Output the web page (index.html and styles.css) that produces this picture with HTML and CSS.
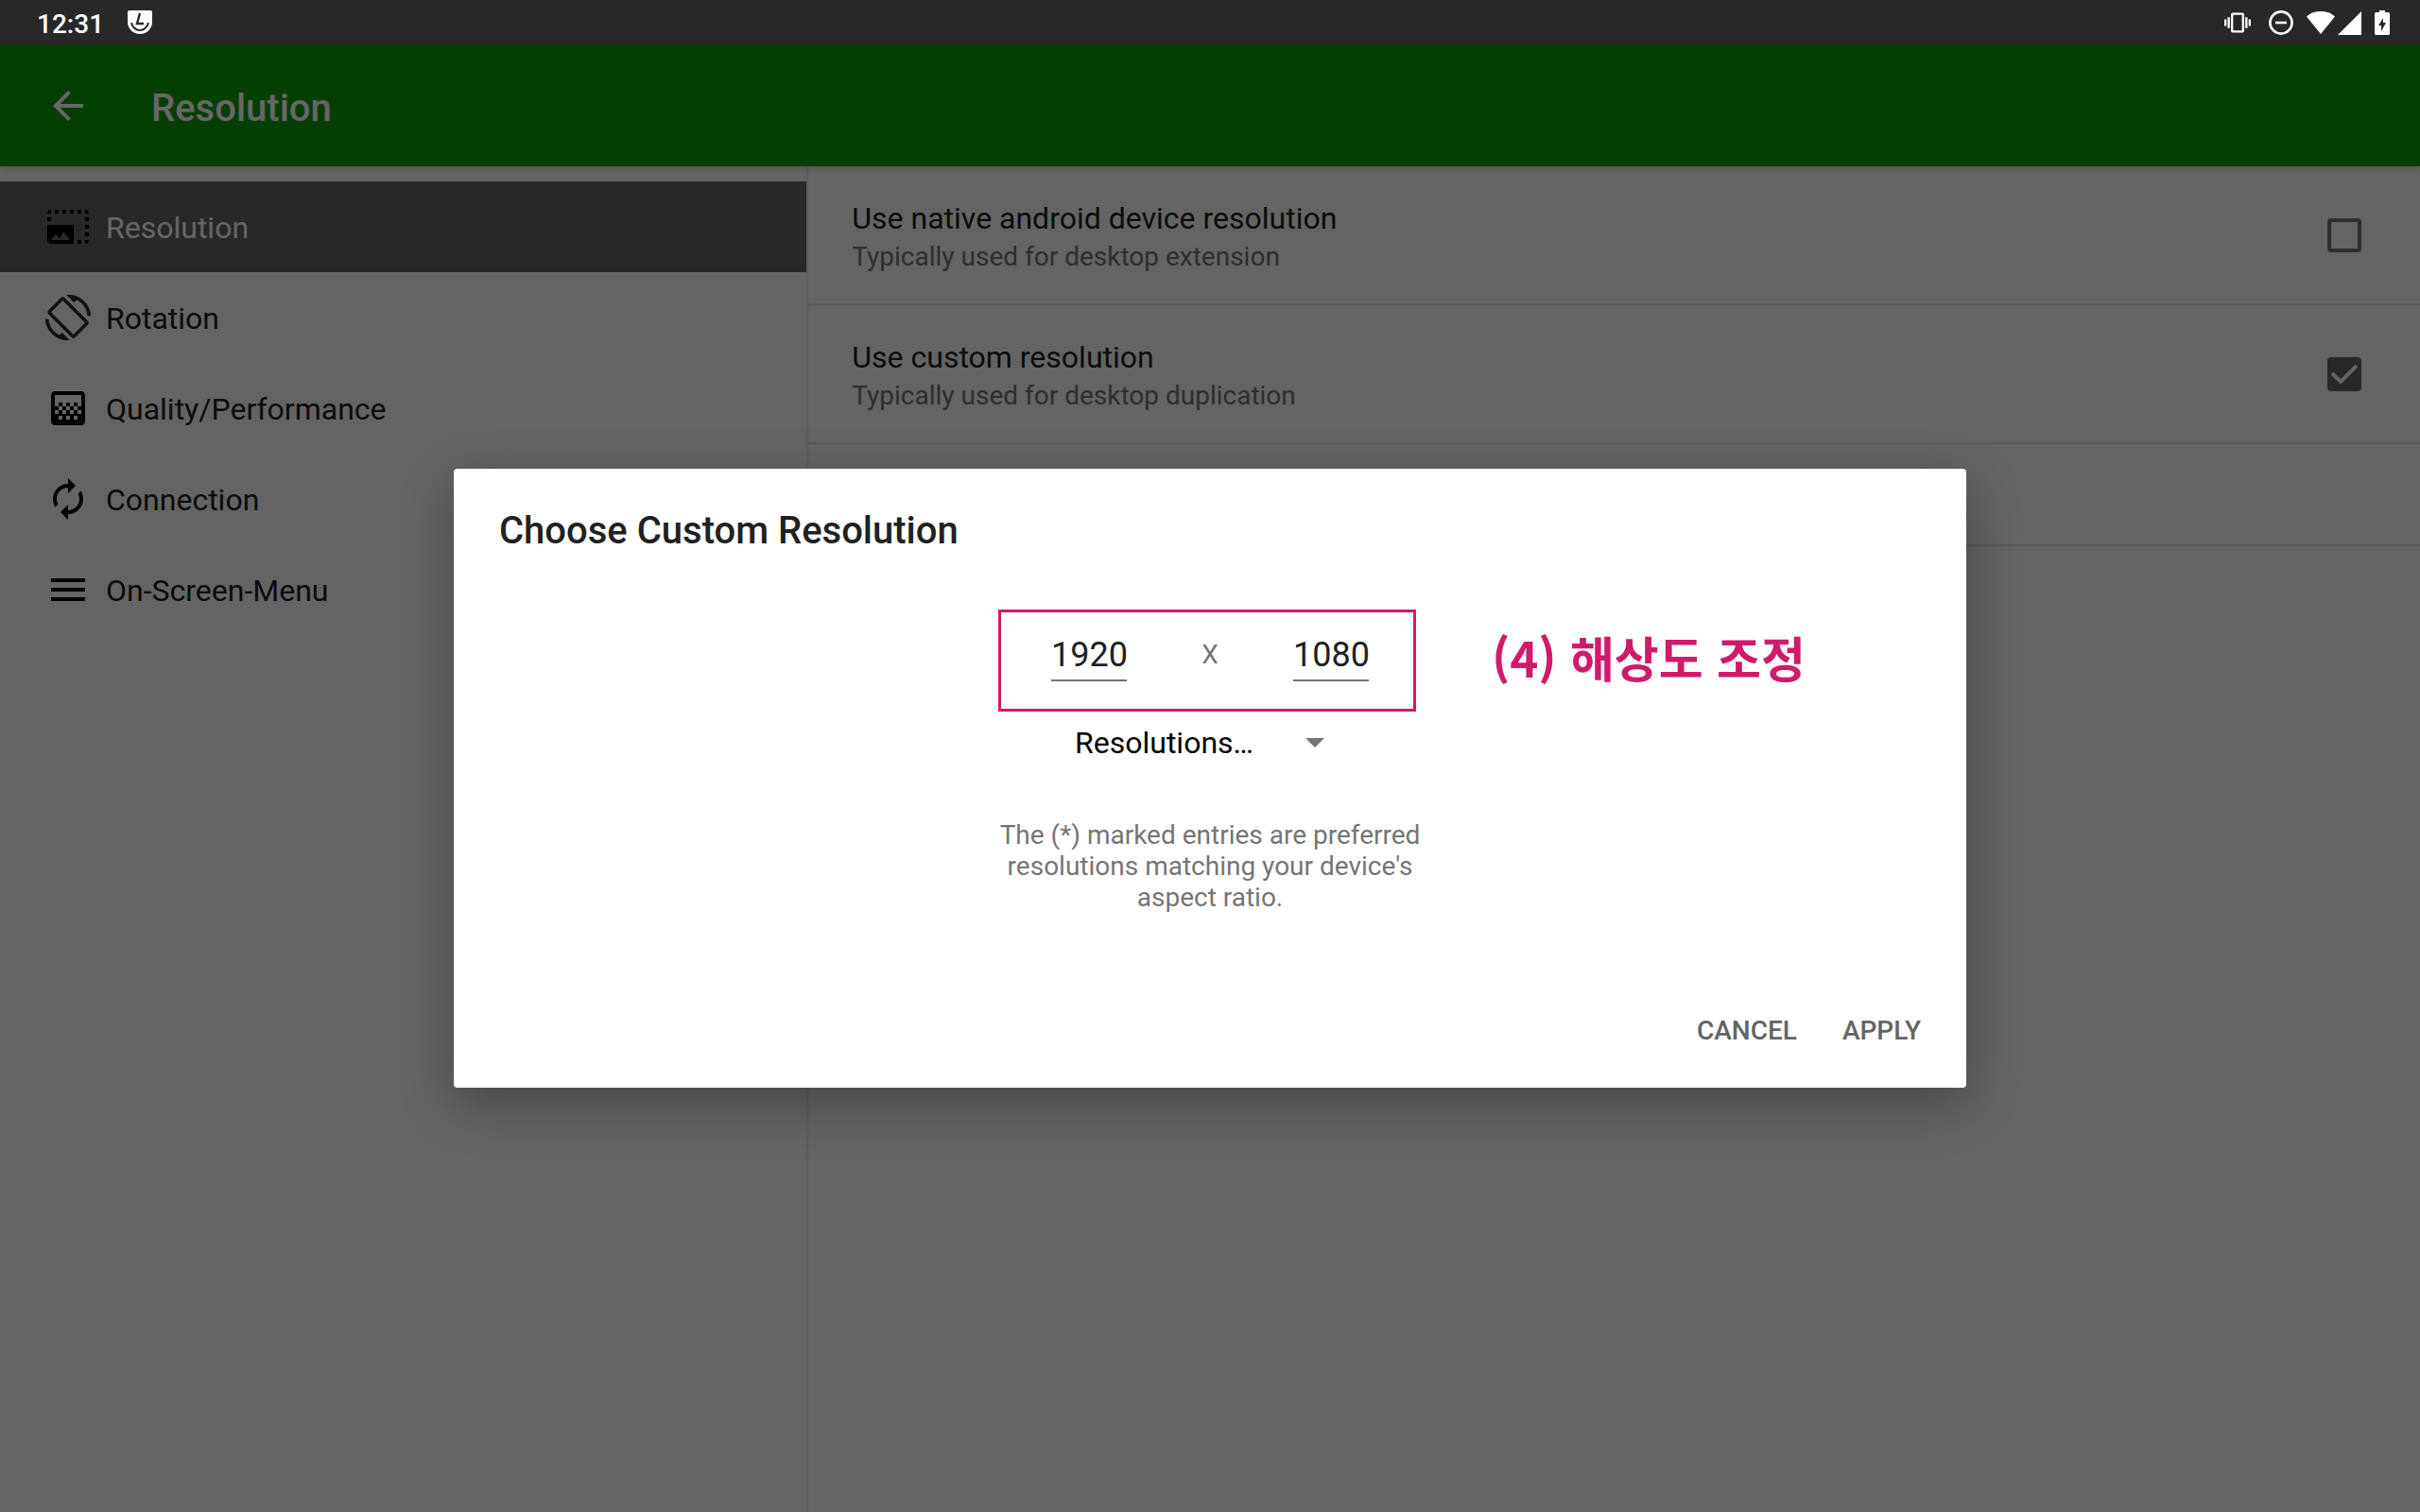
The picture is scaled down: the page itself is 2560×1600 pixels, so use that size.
FILE: index.html
```html
<!DOCTYPE html>
<html lang="en">
<head>
<meta charset="utf-8">
<meta name="viewport" content="width=device-width, initial-scale=1">
<title>Resolution</title>
<link rel="stylesheet" href="styles.css">
</head>
<body>
<div class="status-bar">
  <div class="status-group status-left">
    <time>12:31</time>
    <svg class="app-badge" viewBox="0 0 26 26" width="26" height="26" aria-hidden="true">
      <path fill="#fff" d="M2 0h22a2 2 0 0 1 2 2v10a13 13 0 0 1-26 0V2a2 2 0 0 1 2-2z"/>
      <path fill="none" stroke="#282828" stroke-width="2" d="M4 13c1 5 5 8 9 8s8-3 9-8"/>
      <path fill="none" stroke="#282828" stroke-width="2.400" d="M13 3l-3 11h7"/>
    </svg>
  </div>
  <div class="status-group status-right">
    <svg class="vibrate" viewBox="0 0 24 24" width="28" height="28" fill="#fff" aria-hidden="true"><path d="M0 15h2V9H0v6zm3 2h2V7H3v10zm19-8v6h2V9h-2zm-3 8h2V7h-2v10zM16.500 3h-9C6.670 3 6 3.670 6 4.500v15c0 .83.67 1.500 1.500 1.500h9c.83 0 1.500-.67 1.500-1.500v-15c0-.83-.67-1.500-1.500-1.500zM16 19H8V5h8v14z"/></svg>
    <svg class="dnd" viewBox="0 0 26 26" width="26" height="26" fill="none" stroke="#fff" aria-hidden="true"><circle cx="13" cy="13" r="11.600" stroke-width="2.600"/><path stroke-width="2.600" d="M7 13h12"/></svg>
    <svg class="wifi" viewBox="0 0 30 24" width="30" height="24" fill="#fff" aria-hidden="true"><path d="M15 24L0 5.500C8-1.800 22-1.800 30 5.500z"/></svg>
    <svg class="signal" viewBox="0 0 25 25" width="25" height="25" fill="#fff" aria-hidden="true"><path d="M0 25L25 0v25z"/></svg>
    <svg viewBox="0 0 16 26" width="16" height="26" aria-hidden="true"><path fill="#fff" d="M5 0h6v2h3.500A1.500 1.500 0 0 1 16 3.500v21a1.500 1.500 0 0 1-1.500 1.500h-13A1.500 1.500 0 0 1 0 24.500v-21A1.500 1.500 0 0 1 1.500 2H5z"/><path fill="#282828" d="M9 8v5h3l-5 9v-6H4z"/></svg>
  </div>
</div>

<div class="app">
  <header class="app-bar">
    <button class="back" type="button" aria-label="Back">
      <svg viewBox="0 0 24 24" width="48" height="48" fill="currentColor"><path d="M20 11H7.830l5.590-5.590L12 4l-8 8 8 8 1.410-1.410L7.830 13H20v-2z"/></svg>
    </button>
    <h1>Resolution</h1>
  </header>

  <div class="panes">
    <nav class="sections">
      <a class="section selected" href="#resolution">
        <svg viewBox="0 0 24 24" width="48" height="48" aria-hidden="true"><path d="M21 15h2v2h-2v-2zm0-4h2v2h-2v-2zm2 8h-2v2c1 0 2-1 2-2zM13 3h2v2h-2V3zm8 4h2v2h-2V7zm0-4v2h2c0-1-1-2-2-2zM1 7h2v2H1V7zm16-4h2v2h-2V3zm0 16h2v2h-2v-2zM3 3C2 3 1 4 1 5h2V3zm6 0h2v2H9V3zM5 3h2v2H5V3zm-4 8v8c0 1.100.9 2 2 2h12V11H1zm2 8l2.500-3.210 1.790 2.150 2.500-3.220L13 19H3z"/></svg>
        <span class="section-label">Resolution</span>
      </a>
      <a class="section" href="#rotation">
        <svg viewBox="0 0 24 24" width="48" height="48" fill="#2b2b2b" stroke="#2b2b2b" stroke-width=".4" aria-hidden="true"><path d="M16.480 2.520c3.270 1.550 5.610 4.720 5.970 8.480h1.500C23.440 4.840 18.290 0 12 0l-.66.03 3.810 3.810 1.330-1.320zm-6.250-.77c-.59-.59-1.540-.59-2.120 0L1.750 8.110c-.59.59-.59 1.540 0 2.120l12.020 12.020c.59.59 1.540.59 2.120 0l6.360-6.360c.59-.59.59-1.540 0-2.120L10.230 1.750zm4.600 19.440L2.810 9.170l6.360-6.360 12.020 12.020-6.360 6.360zm-7.310.29C4.250 19.940 1.910 16.760 1.550 13H.05C.56 19.160 5.710 24 12 24l.66-.03-3.810-3.810-1.330 1.320z"/></svg>
        <span class="section-label">Rotation</span>
      </a>
      <a class="section" href="#quality">
        <svg viewBox="0 0 24 24" width="48" height="48" aria-hidden="true"><path d="M11 9h2v2h-2zm-2 2h2v2H9zm4 0h2v2h-2zm2-2h2v2h-2zM7 9h2v2H7zm12-6H5c-1.100 0-2 .9-2 2v14c0 1.100.9 2 2 2h14c1.100 0 2-.9 2-2V5c0-1.100-.9-2-2-2zM9 18H7v-2h2v2zm4 0h-2v-2h2v2zm4 0h-2v-2h2v2zm2-7h-2v2h2v2h-2v-2h-2v2h-2v-2h-2v2H9v-2H7v2H5v-2h2v-2H5V5h14v6z"/></svg>
        <span class="section-label">Quality/Performance</span>
      </a>
      <a class="section" href="#connection">
        <svg viewBox="0 0 24 24" width="48" height="48" aria-hidden="true"><path d="M12 6v3l4-4-4-4v3c-4.420 0-8 3.580-8 8 0 1.570.46 3.030 1.240 4.260L6.700 14.800c-.45-.83-.7-1.790-.7-2.800 0-3.310 2.690-6 6-6zm6.760 1.740L17.300 9.200c.44.84.7 1.790.7 2.800 0 3.310-2.690 6-6 6v-3l-4 4 4 4v-3c4.420 0 8-3.580 8-8 0-1.570-.46-3.030-1.240-4.260z"/></svg>
        <span class="section-label">Connection</span>
      </a>
      <a class="section" href="#menu">
        <svg viewBox="0 0 24 24" width="48" height="48" aria-hidden="true"><path d="M3 18h18v-2H3v2zm0-5h18v-2H3v2zm0-7v2h18V6H3z"/></svg>
        <span class="section-label">On-Screen-Menu</span>
      </a>
    </nav>

    <main class="settings">
      <label class="setting">
        <span class="setting-text">
          <span class="setting-title">Use native android device resolution</span>
          <span class="setting-note">Typically used for desktop extension</span>
        </span>
        <input class="check" type="checkbox">
      </label>
      <label class="setting">
        <span class="setting-text">
          <span class="setting-title">Use custom resolution</span>
          <span class="setting-note">Typically used for desktop duplication</span>
        </span>
        <span class="check-wrap">
          <input class="check" type="checkbox" checked>
          <svg class="tick" viewBox="0 0 36 36" width="36" height="36" aria-hidden="true"><path fill="none" stroke="#fafafa" stroke-width="4" d="M5 17l9 9L31 9"/></svg>
        </span>
      </label>
      <div class="setting setting-short"></div>
    </main>
  </div>

  <div class="scrim">
    <form class="dialog" role="dialog" aria-labelledby="dialog-title">
      <h2 id="dialog-title">Choose Custom Resolution</h2>
      <div class="size-row">
        <input class="size" type="text" inputmode="numeric" aria-label="Width" value="1920">
        <span class="times">X</span>
        <input class="size" type="text" inputmode="numeric" aria-label="Height" value="1080">
      </div>
      <div class="picker">
        <select aria-label="Resolutions">
          <option>Resolutions…</option>
        </select>
        <svg class="caret" viewBox="0 0 20 10" width="20" height="10" aria-hidden="true"><path fill="#757575" d="M0 0h20L10 10z"/></svg>
      </div>
      <p class="hint">The (*) marked entries are preferred resolutions matching your device's aspect ratio.</p>
      <div class="actions">
        <button type="button">CANCEL</button>
        <button type="button">APPLY</button>
      </div>
      <div class="callout-box"></div>
      <div class="callout-text" lang="ko">(4) 해상도 조정</div>
    </form>
  </div>
</div>
</body>
</html>
```

FILE: styles.css
```css
* {
  box-sizing: border-box;
}

body {
  margin: 0;
  min-height: 100vh;
  display: flex;
  flex-direction: column;
  font-family: Roboto, "Noto Sans CJK KR", sans-serif;
  font-size: 32px;
  color: #212121;
  background: #fafafa;
}

h1,
h2,
p {
  margin: 0;
}

svg {
  display: block;
  flex: none;
}

button,
input,
select {
  font: inherit;
  color: inherit;
  margin: 0;
  padding: 0;
  border: 0;
  background: none;
}

/* Status bar */
.status-bar {
  height: 48px;
  padding: 0 32px 0 39px;
  display: flex;
  justify-content: space-between;
  background: #282828;
  color: #fff;
  font-size: 28px;
  font-weight: 500;
  line-height: 48px;
}

.status-bar time {
  padding-top: 3px;
}

.status-group {
  display: flex;
  align-items: center;
}

.status-left {
  gap: 25px;
}

.vibrate {
  margin-right: 19px;
}

.dnd {
  margin-right: 14px;
}

.wifi {
  margin-right: 3px;
}

.signal {
  margin-right: 14px;
}

/* App shell */
.app {
  flex: 1;
  position: relative;
  display: flex;
  flex-direction: column;
}

.app-bar {
  height: 128px;
  padding: 0 48px;
  display: flex;
  align-items: center;
  gap: 64px;
  background: #0c9e00;
  color: #fff;
  box-shadow: 0 2px 8px rgba(0, 0, 0, 0.18);
  z-index: 1;
}

.app-bar h1 {
  font-size: 40px;
  font-weight: 500;
  line-height: 48px;
  padding-top: 6px;
}

.panes {
  flex: 1;
  display: grid;
  grid-template-columns: 1fr 2fr;
}

.sections {
  padding-top: 16px;
}

.section {
  height: 96px;
  padding: 0 48px;
  display: flex;
  align-items: center;
  gap: 16px;
  color: #212121;
  text-decoration: none;
}

.section-label {
  padding-top: 2px;
}

.selected {
  background: #646464;
  color: #fff;
}

.settings {
  box-shadow: inset 2px 0 2px rgba(0, 0, 0, 0.08);
}

.setting {
  min-height: 147px;
  padding: 0 62px 0 48px;
  display: flex;
  align-items: center;
  justify-content: space-between;
  border-bottom: 2px solid #dcdcdc;
}

.setting-short {
  min-height: 108px;
}

.setting-text {
  display: flex;
  flex-direction: column;
  padding-top: 4px;
}

.setting-title {
  line-height: 42px;
}

.setting-note {
  font-size: 28px;
  line-height: 39px;
  color: #757575;
}

.check {
  appearance: none;
  display: block;
  width: 36px;
  height: 36px;
  border: 4px solid #757575;
  border-radius: 4px;
}

.check:checked {
  border-color: #646464;
  background: #646464;
}

.check-wrap {
  display: grid;
}

.check-wrap > * {
  grid-area: 1 / 1;
}

/* Dialog */
.scrim {
  position: absolute;
  inset: 0;
  z-index: 2;
  padding-bottom: 2px;
  display: flex;
  align-items: center;
  justify-content: center;
  background: rgba(0, 0, 0, 0.6);
}

.dialog {
  position: relative;
  width: 62.5%;
  padding: 42px 0 24px;
  display: flex;
  flex-direction: column;
  align-items: center;
  background: #fff;
  border-radius: 4px;
  box-shadow: 0 16px 56px rgba(0, 0, 0, 0.3);
}

.dialog h2 {
  align-self: flex-start;
  padding-left: 48px;
  font-size: 40px;
  font-weight: 500;
  line-height: 48px;
}

.size-row {
  margin-top: 86px;
  display: flex;
  align-items: flex-start;
}

.size {
  width: 80px;
  height: 49px;
  padding-bottom: 5px;
  border-bottom: 2px solid #757575;
  font-size: 36px;
  line-height: 42px;
  text-align: center;
}

.times {
  width: 176px;
  text-align: center;
  font-size: 28px;
  line-height: 42px;
  color: #757575;
}

.picker {
  margin-top: 46px;
  width: 286px;
  display: grid;
  align-items: center;
}

.picker > * {
  grid-area: 1 / 1;
}

.picker select {
  appearance: none;
  height: 38px;
  line-height: 38px;
  color: #000;
}

.caret {
  justify-self: end;
  margin-right: 22px;
  pointer-events: none;
}

.hint {
  margin-top: 62px;
  width: 480px;
  text-align: center;
  font-size: 28px;
  line-height: 33px;
  color: #757575;
}

.actions {
  margin-top: 88px;
  align-self: flex-end;
  padding-right: 32px;
  display: flex;
  gap: 16px;
}

.actions button {
  height: 73px;
  padding: 0 16px;
  font-size: 28px;
  font-weight: 500;
  color: #646464;
}

/* Tutorial callout laid over the dialog */
.callout-box {
  position: absolute;
  left: calc(50% - 224px);
  top: 149px;
  width: 442px;
  height: 108px;
  border: 3px solid #d11a6c;
  pointer-events: none;
}

.callout-text {
  position: absolute;
  left: calc(50% + 298px);
  top: 162px;
  font-family: "Noto Sans CJK KR", sans-serif;
  font-size: 51px;
  font-weight: 700;
  line-height: 75px;
  white-space: nowrap;
  color: #d11a6c;
}
```
